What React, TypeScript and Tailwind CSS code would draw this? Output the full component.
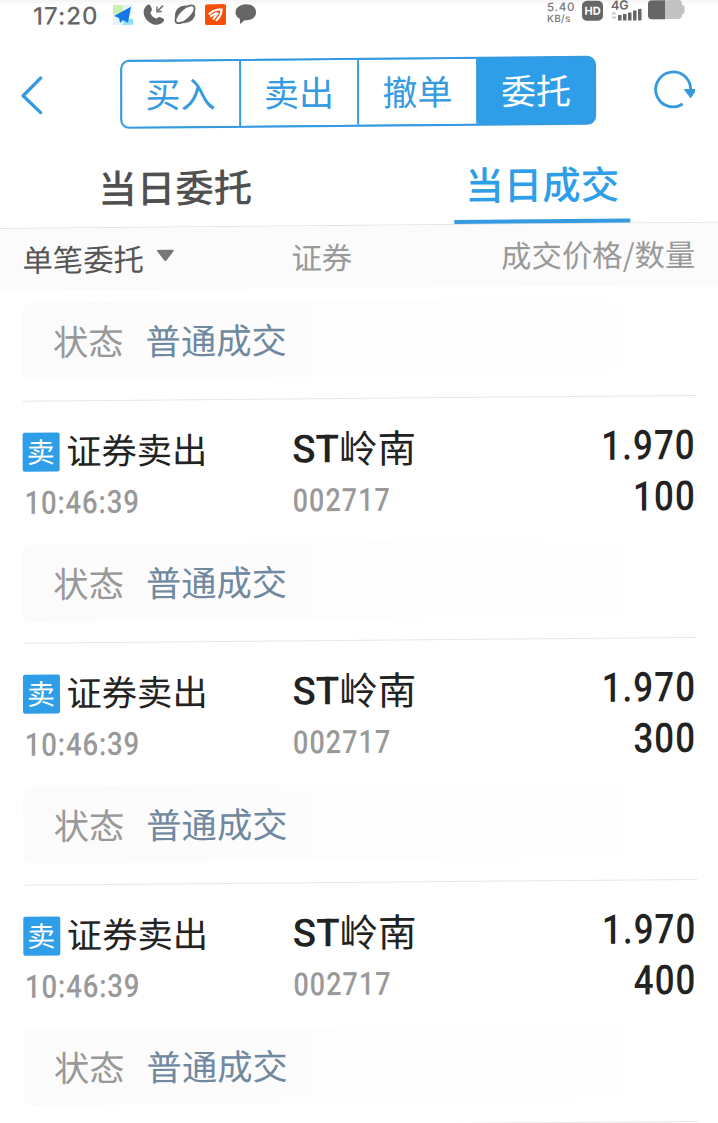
type Deal = {
  status: string;
  action: string;
  name: string;
  time: string;
  code: string;
  price: string;
  amount: string;
};

const actions = ["买入", "卖出", "撤单", "委托"];

const deals: Deal[] = ["100", "300", "400"].map((amount) => ({
  status: "普通成交",
  action: "证券卖出",
  name: "岭南",
  time: "10:46:39",
  code: "002717",
  price: "1.970",
  amount,
}));

export default function App() {
  return (
    <div className="h-[1123px] w-[718px] overflow-hidden bg-linear-to-b from-[#f4f4f4] to-white to-[6px] font-['Noto_Sans_CJK_SC',sans-serif]">
      <div className="h-[1150px] w-[718px] origin-top-left [transform:matrix(1,-0.0088,0.0014,1,0,0)]">
        <StatusBar />
        <ActionBar />
        <Tabs />
        <ColumnHeader />
        <div className="pt-3 pr-[22.5px] pl-[21.5px]">
          <StatusCard status="普通成交" />
          {deals.map((deal) => (
            <DealRow key={deal.amount} deal={deal} />
          ))}
          <div className="mt-[21px] h-px bg-[#e6e6e6]" />
        </div>
      </div>
    </div>
  );
}

function StatusBar() {
  return (
    <div className="flex h-8 items-center pr-[33px] pl-[33px] text-[#666]">
      <span className="w-[79px] pt-0.5 font-[Inter,sans-serif] text-[24px] leading-[30px] font-medium tracking-[1px]">
        17:20
      </span>
      <svg className="mr-[9px]" width="22" height="22" viewBox="0 0 22 22">
        <path d="M1 1h10v10H1z" fill="#c9f0b0" />
        <path d="M11 1h10v10H11zM1 11h10v10H1z" fill="#e4f3f6" />
        <path d="M11 15h10v6H11z" fill="#8fe0fa" />
        <path d="M19 3 2 12l5 2 1 5 3-3 5 3z" fill="#1677e8" />
      </svg>
      <svg className="mr-[9px]" width="22" height="22" viewBox="0 0 22 22" fill="none">
        <path
          d="M3.500 2C-1 6 0 13 5 17.500s11 5 15 1c1.500-1.500 1.500-2.500 0-3.500l-3-1.500c-2-.5-2.500 2-4.500 1.200-2-.7-4.500-3.200-5-5.200-.3-2 2-2.500 1.300-4.500L7.500 2C6.500.5 5 .5 3.500 2Z"
          fill="#666"
        />
        <path d="m20 2-6 6m0-5v5h5" stroke="#777" strokeWidth="1.6" />
      </svg>
      <svg className="mr-[9px]" width="22" height="22" viewBox="0 0 22 22" fill="none">
        <path
          d="M2 15C-.5 7 6 1.500 14 3 9 5.500 5 9.500 2 15ZM20 7.500c2.500 7-4 13-12 11.500 5-2.500 9-6 12-11.500Z"
          fill="#666"
          stroke="#666"
        />
        <path
          d="M14 3c4-2 8-1 6 5M2 14c-2 5 1 7 6 5"
          stroke="#666"
          strokeWidth="1.8"
          strokeLinecap="round"
        />
      </svg>
      <svg className="mr-[9px]" width="21" height="21" viewBox="0 0 21 21" fill="none">
        <rect width="21" height="21" rx="2" fill="#f84e0b" />
        <path
          d="M4.500 9.500C8 6 11 5 16.500 5.500c0 4.500-2 8-5 10.500M6 12l5-3M8.500 14.500l4-5"
          stroke="#fff"
          strokeWidth="2.2"
          strokeLinecap="round"
        />
      </svg>
      <svg width="22" height="22" viewBox="0 0 22 22">
        <path
          d="M11 1.500C5 1.500.5 5 .5 9.500c0 3 1.500 5 4.500 6.500v5l4.500-3.500c7.500.5 11.500-3 11.500-8s-4-8-10-8Z"
          fill="#666"
        />
      </svg>
      <div className="ml-auto flex items-center">
        <div className="w-[35px] pt-1 font-[Inter,sans-serif] font-medium text-[#777]">
          <div className="text-[11.5px] leading-[10px] tracking-[0.7px]">5.40</div>
          <div className="text-[10px] leading-[12px] tracking-[0.3px]">KB/s</div>
        </div>
        <div className="mr-2 flex h-5 w-[21px] items-center justify-center rounded-[5px] bg-[#666] font-[Inter,sans-serif] text-[11px] font-bold text-white">
          HD
        </div>
        <svg className="mr-1.5" width="31" height="22" viewBox="0 0 31 22" fill="#666">
          <text x="0" y="10" fontSize="12.500" fontWeight="600" fontFamily="Inter">
            4G
          </text>
          <path d="m0 15 3-3 3 3zM0 17l3 3 3-3z" fill="#ccc" />
          <path d="M7 15.500h3.500V21H7zM12 14.500h3.500V21H12zM17 13h3.500v8H17zM22 11h3.500v10H22zM27 9.500h3.500V21H27z" />
        </svg>
        <svg width="37" height="20" viewBox="0 0 37 20">
          <rect width="34" height="19" rx="4" fill="#c2c2c2" />
          <rect x="32" y="5" width="4.500" height="9" rx="2" fill="#c2c2c2" />
          <path d="M17 0v19H4a4 4 0 0 1-4-4V4a4 4 0 0 1 4-4z" fill="#666" />
        </svg>
      </div>
    </div>
  );
}

function ActionBar() {
  return (
    <div className="flex h-[126px] items-center pr-[23px] pl-[20px]">
      <svg width="24" height="40" viewBox="0 0 24 40" fill="none">
        <path
          d="M20.500 3.500 3 21l17.500 17"
          stroke="#369ae0"
          strokeWidth="3.4"
          strokeLinecap="round"
          strokeLinejoin="round"
        />
      </svg>
      <div className="ml-[76px] flex h-[69px] w-[476px] divide-x-2 divide-[#369ae0] overflow-hidden rounded-[9px] border-2 border-[#369ae0] bg-[#2f9ee8]">
        {actions.map((action) => (
          <div
            key={action}
            className={`flex flex-1 items-center justify-center pb-1 text-[35px] leading-none ${
              action === "委托" ? "bg-[#2f9ee8] text-white" : "bg-white text-[#369ae0]"
            }`}
          >
            {action}
          </div>
        ))}
      </div>
      <svg className="ml-auto" width="44" height="44" viewBox="0 0 44 44" fill="none">
        <path d="M31.500 37A17.500 17.500 0 1 1 39.500 22" stroke="#369ae0" strokeWidth="2.800" />
        <path d="M32.500 22h13.500l-6.500 9.500z" fill="#369ae0" />
      </svg>
    </div>
  );
}

function Tabs() {
  return (
    <div className="flex h-[71px] justify-between border-b border-[#e3e3e3] pr-[88px] pl-[87px] text-[38.5px] leading-[58px] font-medium">
      <div className="w-[176px] text-center text-[#505050]">当日委托</div>
      <div className="h-[70px] w-[176px] border-b-4 border-[#369ae0] text-center text-[#2f9ee8]">
        当日成交
      </div>
    </div>
  );
}

function ColumnHeader() {
  return (
    <div className="flex h-[62px] items-center bg-[#fbfbfb] pr-[23px] pb-0.5 pl-[22px] text-[30.4px] leading-[58px] text-[#999]">
      <div className="flex w-[269px] items-center gap-3 text-[#555]">
        单笔委托
        <svg className="-mt-1" width="18" height="12" viewBox="0 0 18 12">
          <path d="M2 0h14q2 0 1 2l-7 9q-1 1-2 0L1 2Q0 0 2 0Z" fill="#777" />
        </svg>
      </div>
      <div>证券</div>
      <div className="ml-auto">成交价格/数量</div>
    </div>
  );
}

function StatusCard({ status }: { status: string }) {
  return (
    <div className="flex h-[77px] items-center gap-[22px] rounded-lg bg-linear-to-r from-[#fbfbfb] to-white pl-[31px] text-[35.3px] leading-[75px]">
      <span className="-mt-0.5 text-[#999]">状态</span>
      <span className="-mt-0.5 text-[#7088a0]">{status}</span>
    </div>
  );
}

function DealRow({ deal }: { deal: Deal }) {
  return (
    <>
      <div className="mt-[21px] flex h-[144px] border-t border-[#e6e6e6] pt-[21px]">
        <div className="w-[270px]">
          <div className="flex h-[54px] items-center">
            <span className="mt-1 mr-[7px] flex h-[39px] w-[37px] items-center justify-center rounded-xs bg-[#2f9ee8] pb-0.5 text-[28px] leading-none text-white">
              卖
            </span>
            <span className="text-[35.3px] leading-[54px] text-[#222]">{deal.action}</span>
          </div>
          <div className="origin-left scale-x-[0.86] pt-px pl-0.5 font-[Roboto,sans-serif] text-[32px] leading-[50px] font-medium tracking-[1px] text-[#999]">
            {deal.time}
          </div>
        </div>
        <div>
          <div className="-mt-px text-[38.5px] leading-[54px] text-[#222]">
            <span className="relative -top-px font-[Roboto,sans-serif] font-medium">ST</span>
            {deal.name}
          </div>
          <div className="-mt-px origin-left scale-x-[0.84] font-[Roboto,sans-serif] text-[32px] leading-[49px] font-medium tracking-[1.3px] text-[#999]">
            {deal.code}
          </div>
        </div>
        <div className="ml-auto origin-right scale-x-[0.85] pt-[3px] text-right font-[Roboto,sans-serif] text-[41px] leading-[51px] font-medium tracking-[1.3px] text-[#222]">
          <div>{deal.price}</div>
          <div>{deal.amount}</div>
        </div>
      </div>
      <StatusCard status={deal.status} />
    </>
  );
}
